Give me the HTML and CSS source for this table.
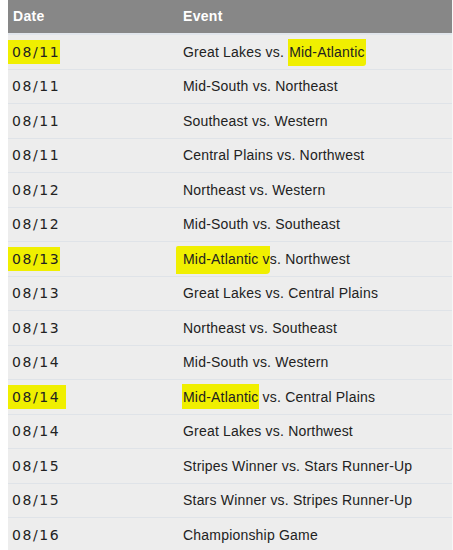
FILE: index.html
```html
<!DOCTYPE html>
<html>
<head>
<meta charset="utf-8">
<link rel="stylesheet" href="styles.css">
</head>
<body>
<div class="schedule">
  <div class="row head">
    <div class="date">Date</div>
    <div class="event">Event</div>
  </div>
  <div class="row"><div class="date"><span class="hl hl-date">08/11</span></div><div class="event">Great Lakes vs. <span class="hl hl-a">Mid-Atlantic</span></div></div>
  <div class="row"><div class="date">08/11</div><div class="event">Mid-South vs. Northeast</div></div>
  <div class="row"><div class="date">08/11</div><div class="event">Southeast vs. Western</div></div>
  <div class="row"><div class="date">08/11</div><div class="event">Central Plains vs. Northwest</div></div>
  <div class="row"><div class="date">08/12</div><div class="event">Northeast vs. Western</div></div>
  <div class="row"><div class="date">08/12</div><div class="event">Mid-South vs. Southeast</div></div>
  <div class="row"><div class="date"><span class="hl hl-date">08/13</span></div><div class="event"><span class="hl hl-b">Mid-Atlantic v</span>s. Northwest</div></div>
  <div class="row"><div class="date">08/13</div><div class="event">Great Lakes vs. Central Plains</div></div>
  <div class="row"><div class="date">08/13</div><div class="event">Northeast vs. Southeast</div></div>
  <div class="row"><div class="date">08/14</div><div class="event">Mid-South vs. Western</div></div>
  <div class="row"><div class="date"><span class="hl hl-date2">08/14</span></div><div class="event"><span class="hl hl-c">Mid-Atlantic</span> vs. Central Plains</div></div>
  <div class="row"><div class="date">08/14</div><div class="event">Great Lakes vs. Northwest</div></div>
  <div class="row"><div class="date">08/15</div><div class="event">Stripes Winner vs. Stars Runner-Up</div></div>
  <div class="row"><div class="date">08/15</div><div class="event">Stars Winner vs. Stripes Runner-Up</div></div>
  <div class="row"><div class="date">08/16</div><div class="event">Championship Game</div></div>
</div>
</body>
</html>
```
FILE: styles.css
```css
html, body {
  margin: 0;
  padding: 0;
  background: #ffffff;
}
body {
  padding-left: 8px;
  font-family: "Liberation Sans", Arial, sans-serif;
  font-size: 14px;
  color: #222222;
  overflow: hidden;
}
.schedule {
  display: flex;
  flex-direction: column;
  border-right: 1px solid #f7f7f7;
}
.row {
  display: grid;
  grid-template-columns: 175px 1fr;
  align-items: center;
  height: 34.5px;
  box-sizing: border-box;
  background: #ededed;
  border-bottom: 1px solid #dfe3e8;
}
.row.head {
  height: 35px;
  background: #878787;
  color: #ffffff;
  font-weight: bold;
  border-bottom: 2px solid #e1e6ec;
  padding-bottom: 2px;
}
.date {
  padding-left: 4px;
  font-family: "DejaVu Sans", sans-serif;
  font-size: 14px;
  letter-spacing: 1.6px;
}
.head .date {
  padding-left: 5px;
  font-family: "Liberation Sans", Arial, sans-serif;
  letter-spacing: 0.3px;
}
.event {
  letter-spacing: 0.2px;
}
.head .event {
  letter-spacing: 0.3px;
}
.hl {
  background: #f0ef00;
  padding: 4px 0;
}
.hl-date {
  margin-left: -4px;
  padding-left: 4px;
  padding-right: 0;
}
.hl-date2 {
  margin-left: -4px;
  padding-left: 4px;
  padding-right: 6px;
}
.hl-a {
  padding: 5px 1px 6px 1px;
  border-radius: 0 0 3px 0;
}
.hl-b {
  margin-left: -7px;
  padding: 5px 0 7px 7px;
  border-radius: 2px 0 4px 0;
}
.hl-c {
  margin-left: -1px;
  padding: 5px 0 4px 1px;
}
```
